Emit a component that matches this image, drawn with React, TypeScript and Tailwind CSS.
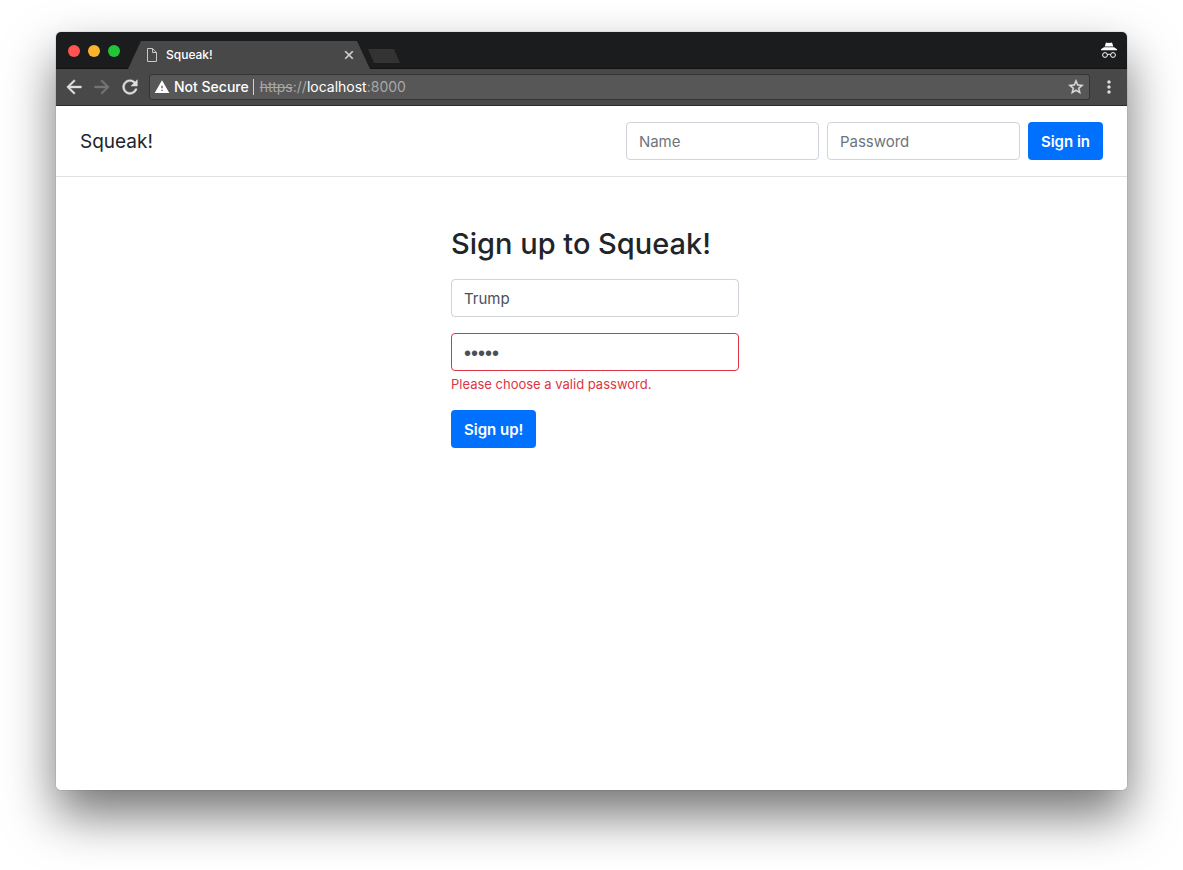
import React from 'react';
import {
  MdArrowBack,
  MdArrowForward,
  MdClose,
  MdMoreVert,
  MdRefresh,
  MdStarBorder,
  MdWarning,
} from 'react-icons/md';

function IncognitoIcon() {
  return (
    <svg viewBox="0 0 18 18" className="size-[18px]" fill="none" aria-hidden="true">
      <path d="M6 .5 8 1l1-.3 1 .3 2-.5 1.300 4H4.700zM4 5.200h10l3 2v1H1v-1z" fill="#fff" />
      <circle cx="5" cy="13" r="2.400" stroke="#fff" />
      <circle cx="13" cy="13" r="2.400" stroke="#fff" />
      <path d="M7.400 12.700c.8-.6 2.400-.6 3.200 0" stroke="#fff" />
    </svg>
  );
}

function PageIcon() {
  return (
    <svg viewBox="0 0 12 14" className="h-3.5 w-3" fill="none" stroke="#c9c9c9" aria-hidden="true">
      <path d="M1.500.5h5l4 4v9h-9zM6.500.5v4h4" />
    </svg>
  );
}

function TabStrip() {
  return (
    <div className="flex h-[37px] items-end bg-[#1b1c1d] shadow-[inset_0_-1px_0_#121314]">
      <div className="flex gap-2 self-center pl-3">
        <button aria-label="Close window" className="size-3 rounded-full bg-[#ff5450]" />
        <button aria-label="Minimize window" className="size-3 rounded-full bg-[#fdb32b]" />
        <button aria-label="Zoom window" className="size-3 rounded-full bg-[#23c538]" />
      </div>
      <div className="ml-2 h-7 w-[242px] bg-[#484848] [clip-path:polygon(13px_0,229px_0,100%_100%,0_100%)]">
        <div className="flex h-full items-center pl-[18px] pr-[14px]">
          <PageIcon />
          <span className="ml-2 flex-1 text-[12px] font-medium leading-4 text-white">Squeak!</span>
          <button aria-label="Close tab" className="text-[#d0d0d0]">
            <MdClose className="size-[14px] [&>path:last-child]:[stroke-width:1]" />
          </button>
        </div>
      </div>
      <button
        aria-label="New tab"
        className="-ml-0.5 mb-1.5 h-3.5 w-8 bg-[#333333] [clip-path:polygon(0_0,26px_0,100%_100%,6px_100%)]"
      />
      <div className="ml-auto self-center pr-[9px]">
        <IncognitoIcon />
      </div>
    </div>
  );
}

function Toolbar() {
  return (
    <div className="flex h-[37px] items-center border-b border-[#2b2b2b] bg-[#484848] pl-[7px] pr-2">
      <div className="flex gap-1.5 text-[#dedede]">
        <button aria-label="Back">
          <MdArrowBack className="size-[22px] [&>path:last-child]:[stroke-width:0.5]" />
        </button>
        <button aria-label="Forward" disabled className="text-[#757575]">
          <MdArrowForward className="size-[22px] [&>path:last-child]:[stroke-width:0.5]" />
        </button>
        <button aria-label="Reload">
          <MdRefresh className="size-[22px] [&>path:last-child]:[stroke-width:0.5]" />
        </button>
      </div>
      <div className="ml-2 flex h-[26px] flex-1 items-center rounded-[3px] border border-[#343434] bg-[#575757] px-1 text-[14px] leading-5">
        <MdWarning className="size-4 text-white" />
        <span className="ml-1 font-medium text-white">Not Secure</span>
        <span className="ml-1 mr-1.5 h-4 w-px bg-[#d0d0d0]" />
        <span className="text-[#a8a8a8]">
          <span className="line-through">https</span>://<span className="text-white">localhost</span>:8000
        </span>
        <button aria-label="Bookmark this page" className="ml-auto text-[#dedede]">
          <MdStarBorder className="size-[18px] [&>path:last-child]:[stroke-width:0.5]" />
        </button>
      </div>
      <button aria-label="Menu" className="ml-[9px] text-[#dedede]">
        <MdMoreVert className="size-5" />
      </button>
    </div>
  );
}

const field =
  'h-[38px] rounded border bg-white px-3 leading-6 text-[#495057] outline-none placeholder:text-[#6c757d]';
const primary = 'h-[38px] rounded bg-[#0070ff] px-[13px] pt-0.5 text-[15px] font-semibold leading-6 text-white';

function SiteHeader() {
  return (
    <header className="flex items-center justify-between border-b border-[#dee2e6] px-6 py-4">
      <a href="#" className="pt-0.5 text-[19px] leading-6 text-[#212529]">
        Squeak!
      </a>
      <form className="flex gap-2" onSubmit={(e) => e.preventDefault()}>
        <input aria-label="Name" placeholder="Name" className={`${field} w-[193px] border-[#ced4da] text-[15px]`} />
        <input
          aria-label="Password"
          type="password"
          placeholder="Password"
          className={`${field} w-[193px] border-[#ced4da] text-[15px]`}
        />
        <button className={primary}>Sign in</button>
      </form>
    </header>
  );
}

function SignUp() {
  return (
    <main className="flex flex-1 justify-center pl-[7px] pt-12">
      <form className="w-[288px]" onSubmit={(e) => e.preventDefault()}>
        <h1 className="mb-4 whitespace-nowrap text-[29px] font-medium leading-[38px] text-[#212529]">
          Sign up to Squeak!
        </h1>
        <input
          aria-label="Name"
          defaultValue="Trump"
          className={`${field} mb-4 block w-full border-[#ced4da] text-[15px]`}
        />
        <input
          aria-label="Password"
          type="password"
          defaultValue="abcde"
          aria-invalid="true"
          aria-describedby="password-error"
          className={`${field} block w-full border-[#dc3545] pt-0.5 font-['Liberation_Sans',sans-serif] text-[20px]`}
        />
        <p id="password-error" className="mb-4 mt-1 text-[13px] leading-[19px] text-[#dc3545]">
          Please choose a valid password.
        </p>
        <button className={primary}>Sign up!</button>
      </form>
    </main>
  );
}

export default function App() {
  return (
    <div className="flex min-h-screen flex-col overflow-hidden bg-white px-14 pb-20 pt-8 font-['Inter','Liberation_Sans',sans-serif]">
      <div className="flex flex-1 flex-col rounded-[5px] shadow-[0_0_1px_rgba(0,0,0,0.6),0_25px_50px_rgba(0,0,0,0.55)]">
        <div className="flex flex-1 flex-col overflow-hidden rounded-[5px] bg-white">
          <TabStrip />
          <Toolbar />
          <SiteHeader />
          <SignUp />
        </div>
      </div>
    </div>
  );
}
